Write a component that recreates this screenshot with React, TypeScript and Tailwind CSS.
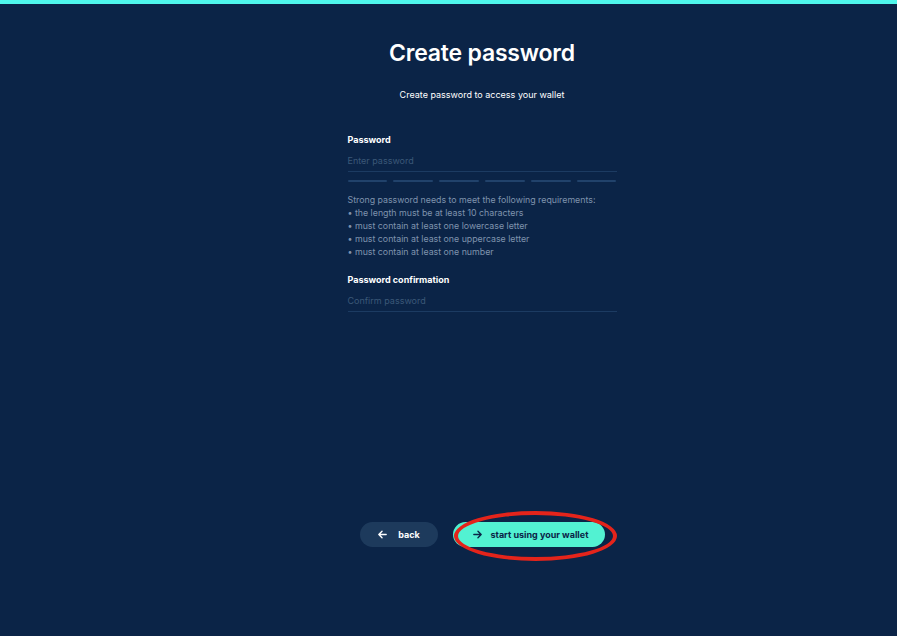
import React from "react";

const requirements = [
  "the length must be at least 10 characters",
  "must contain at least one lowercase letter",
  "must contain at least one uppercase letter",
  "must contain at least one number",
];

const ArrowLeft = () => (
  <svg className="h-[11px] w-[11px]" viewBox="0 0 24 24" fill="none" stroke="currentColor" strokeWidth="3" strokeLinecap="round" strokeLinejoin="round">
    <path d="M20 12H4M11 5l-7 7 7 7" />
  </svg>
);

const ArrowRight = () => (
  <svg className="h-[11px] w-[11px]" viewBox="0 0 24 24" fill="none" stroke="currentColor" strokeWidth="3" strokeLinecap="round" strokeLinejoin="round">
    <path d="M4 12h16M13 5l7 7-7 7" />
  </svg>
);

const App = () => {
  return (
    <div className="flex h-[636px] w-full flex-col bg-[#0b2447] font-['Inter',sans-serif]">
      <div className="h-[4px] w-full bg-[#4ff7ec]" />
      <div className="mx-auto flex flex-1 pl-[67px]">
        <main className="flex w-[269px] flex-col">
          <h1 className="mt-[34px] text-center text-[23px] font-semibold leading-[30px] tracking-[-0.2px] text-white">
            Create password
          </h1>
          <p className="mt-[20px] text-center text-[9px] leading-[14px] text-white">
            Create password to access your wallet
          </p>

          <label className="mt-[32px] text-[9px] font-bold leading-[12px] text-white">Password</label>
          <div className="mt-[9px] border-b border-[#1c3b62] pb-[4px] text-[9px] leading-[12px] text-[#3b5878]">
            Enter password
          </div>
          <div className="mt-[8px] grid grid-cols-6 gap-[6px]">
            {[0, 1, 2, 3, 4, 5].map((i) => (
              <div key={i} className="h-[2px] rounded-full bg-[#21426b]" />
            ))}
          </div>

          <div className="mt-[11px] text-[8.8px] leading-[13px] text-[#7f93ad]">
            <p>Strong password needs to meet the following requirements:</p>
            {requirements.map((r) => (
              <p key={r}>• {r}</p>
            ))}
          </div>

          <label className="mt-[16px] text-[9px] font-bold leading-[12px] text-white">Password confirmation</label>
          <div className="mt-[9px] border-b border-[#1c3b62] pb-[4px] text-[9px] leading-[12px] text-[#3b5878]">
            Confirm password
          </div>

          <div className="mt-auto mb-[89px] flex items-center justify-center gap-[21px]">
            <button className="flex h-[25px] w-[78px] items-center justify-center gap-[10px] rounded-full bg-[#1d3a5c] text-[9px] font-bold text-white">
              <ArrowLeft />
              back
            </button>
            <div className="relative">
              <div className="absolute -left-[6px] top-0 h-[25px] w-[40px] rounded-full bg-[#4ff0cf]" />
              <button className="relative flex h-[25px] w-[146px] items-center justify-center gap-[8px] rounded-full bg-[#52f2d2] pr-[3px] text-[9px] font-bold text-[#0b2447]">
                <ArrowRight />
                start using your wallet
              </button>
              <div className="pointer-events-none absolute -left-[5px] -top-[11px] h-[50px] w-[163px] rounded-[50%] border-[4px] border-[#e4241b]" />
            </div>
          </div>
        </main>
      </div>
    </div>
  );
};

export default App;
